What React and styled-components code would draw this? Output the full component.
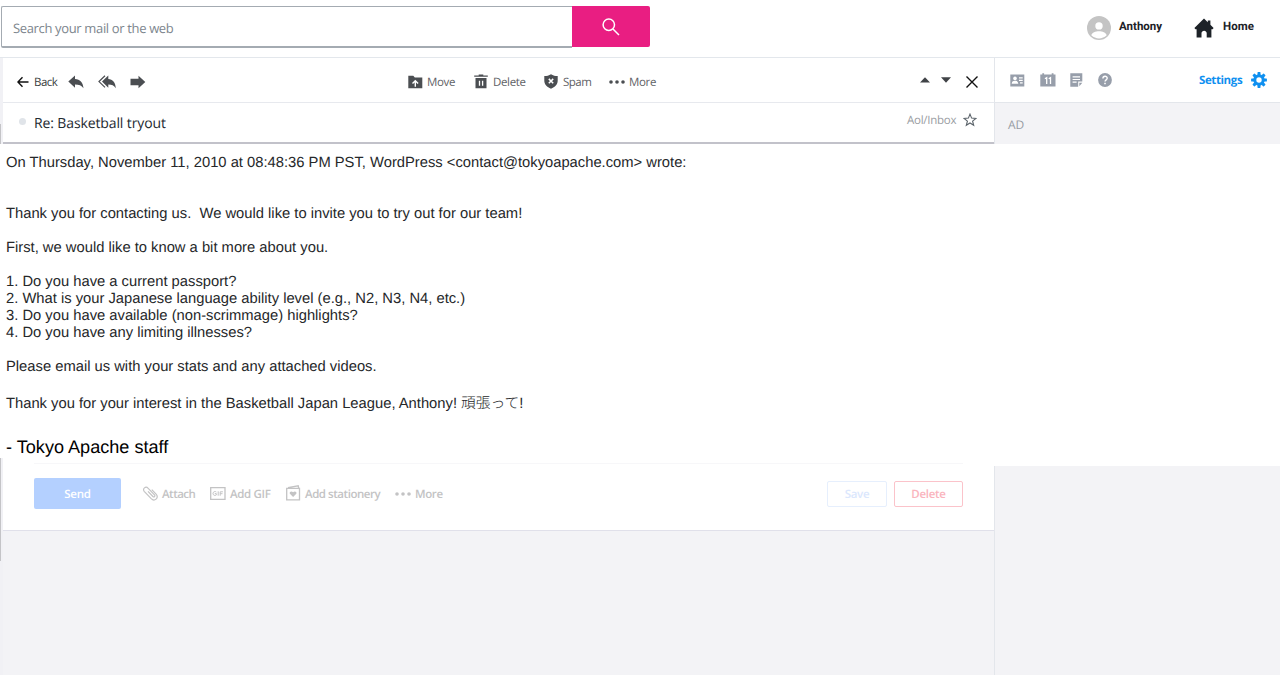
import React from "react";
import styled, { createGlobalStyle } from "styled-components";

const messageLines = [
  { text: "On Thursday, November 11, 2010 at 08:48:36 PM PST, WordPress <contact@tokyoapache.com> wrote:", gap: 34 },
  { text: "Thank you for contacting us.  We would like to invite you to try out for our team!", gap: 17 },
  { text: "First, we would like to know a bit more about you.", gap: 17 },
  { text: "1. Do you have a current passport?" },
  { text: "2. What is your Japanese language ability level (e.g., N2, N3, N4, etc.)" },
  { text: "3. Do you have available (non-scrimmage) highlights?" },
  { text: "4. Do you have any limiting illnesses?", gap: 17 },
  { text: "Please email us with your stats and any attached videos.", gap: 20 },
];

const Dots = () => (
  <svg width="16" height="14" viewBox="0 0 16 14" fill="currentColor">
    <circle cx="2" cy="7" r="1.8" />
    <circle cx="8" cy="7" r="1.8" />
    <circle cx="14" cy="7" r="1.8" />
  </svg>
);

const BackIcon = () => (
  <svg width="12" height="12" viewBox="0 0 12 12" fill="none" stroke="#111" strokeWidth="1.4">
    <path d="M11.5 6H1M5.5 1.3L.9 6l4.6 4.7" />
  </svg>
);

const ReplyIcon = () => (
  <svg width="16" height="14" viewBox="0 0 16 14" fill="currentColor">
    <path d="M7 .5v3.4c5 .3 8 3.300 8.500 9.300C13.500 10.300 11 9.400 7 9.400v3.300L.3 6.600z" />
  </svg>
);

const ReplyAllIcon = () => (
  <svg width="18" height="14" viewBox="0 0 18 14" fill="currentColor">
    <path d="M10.300 .5v3.400c4.300.3 7.200 3.300 7.500 9.300-1.700-2.900-3.900-3.800-7.500-3.800v3.300L4 6.600z" />
    <path d="M7 .8L1 6.600l6 5.800" fill="none" stroke="currentColor" strokeWidth="1.200" />
  </svg>
);

const ForwardIcon = () => (
  <svg width="16" height="14" viewBox="0 0 16 14" fill="currentColor">
    <path d="M.5 3.800h8V.8L15.300 7l-6.800 6.200v-3h-8z" />
  </svg>
);

const MoveIcon = () => (
  <svg width="15" height="14" viewBox="0 0 15 14">
    <path d="M.3.800h5l1.500 1.700h7.500v10.800H.3z" fill="currentColor" />
    <path d="M7.300 11.800V6M4.500 8.600l2.800-2.800 2.800 2.800" fill="none" stroke="#fff" strokeWidth="1.400" />
  </svg>
);

const TrashIcon = () => (
  <svg width="14" height="15" viewBox="0 0 14 15">
    <path d="M.2 1.500h4.500V.5h4.600v1h4.500v1.300H.2zM1.500 4h11v10.200h-11z" fill="currentColor" />
    <path d="M5.500 6.800v5M8.600 6.800v5" stroke="#fff" strokeWidth="1.300" />
  </svg>
);

const ShieldIcon = () => (
  <svg width="14" height="15" viewBox="0 0 14 15">
    <path d="M7 .3c2 1.400 4.200 1.700 6.700 1.700v4.500c0 4-2.700 6.500-6.700 8.200C3 13 .3 10.500.3 6.500V2C2.800 2 5 1.700 7 .3z" fill="currentColor" />
    <path d="M4.800 4.900l4.400 4.400M9.200 4.900L4.800 9.300" stroke="#fff" strokeWidth="1.500" />
  </svg>
);

const CloseIcon = () => (
  <svg width="12" height="12" viewBox="0 0 12 12" stroke="#111" strokeWidth="1.400">
    <path d="M.5.5l11 11M11.500.5l-11 11" />
  </svg>
);

const StarIcon = () => (
  <svg width="14" height="14" viewBox="0 0 14 14" fill="none" stroke="#5b636a" strokeWidth="1.100">
    <path d="M7 1.100l1.600 4 4.300.3-3.300 2.700 1.100 4.200L7 10l-3.700 2.300 1.100-4.200L1.100 5.400l4.300-.3z" />
  </svg>
);

const ContactsIcon = () => (
  <svg width="15" height="13" viewBox="0 0 15 13">
    <path d="M.3.500h14v12H.3z" fill="currentColor" />
    <circle cx="5" cy="4.400" r="1.800" fill="#fff" />
    <path d="M1.700 9.700c.2-2.300 1.500-2.900 3.300-2.900s3.100.6 3.300 2.900zM9 3.200h3.700v1.200H9zM9 5.700h3.700v1.200H9zM10 8.200h2.700v1.200H10z" fill="#fff" />
  </svg>
);

const CalendarIcon = () => (
  <svg width="16" height="14" viewBox="0 0 16 14">
    <path d="M.3 1.500h2V.3h1.800v1.200h7.600V.3h1.800v1.200h2v12H.3z" fill="currentColor" />
    <path d="M4.900 5.700l1.800-1v6.200M8.700 5.700l1.800-1v6.200" fill="none" stroke="#fff" strokeWidth="1.300" />
  </svg>
);

const NoteIcon = () => (
  <svg width="13" height="14" viewBox="0 0 13 14">
    <path d="M.3.300h12v8.200H8.200v5.200H.3z" fill="currentColor" />
    <path d="M9.300 9.700h3l-3 3.600z" fill="currentColor" />
    <path d="M2.600 3.900h7.400M2.600 6.500h7.400M2.600 9.100h4" stroke="#fff" strokeWidth="1.100" />
  </svg>
);

const HelpIcon = () => (
  <svg width="14" height="14" viewBox="0 0 14 14">
    <circle cx="7" cy="7" r="6.900" fill="currentColor" />
    <path d="M4.900 5.500c0-3 4.300-2.800 4.300-.3C9.200 6.800 7 6.900 7 8.600" fill="none" stroke="#fff" strokeWidth="1.400" />
    <path d="M6.200 9.700h1.600v1.500H6.200z" fill="#fff" />
  </svg>
);

const GearIcon = () => (
  <svg width="16" height="16" viewBox="0 0 16 16">
    <g fill="currentColor">
      {[0, 45, 90, 135].map((angle) => (
        <rect key={angle} x="6.500" y="0.100" width="3" height="15.800" rx=".6" transform={`rotate(${angle} 8 8)`} />
      ))}
      <circle cx="8" cy="8" r="5.700" />
    </g>
    <circle cx="8" cy="8" r="2.700" fill="#fff" />
  </svg>
);

const ClipIcon = () => (
  <svg width="15" height="15" viewBox="0 0 15 15" fill="none" stroke="currentColor" strokeWidth="1.200">
    <path d="M5 5.300l4.900 5.200c1.200 1.100 2.700-.4 1.600-1.600L5.200 2.300C2.700-.3-.9 2.700 1.200 5.300l7 7.400c3.300 3.300 8-.8 4.900-4.500L8.800 3.700" />
  </svg>
);

const GifIcon = () => (
  <svg width="16" height="13" viewBox="0 0 16 13" fill="none" stroke="currentColor">
    <path d="M.7.700h14.300v11.600H.7z" strokeWidth="1.300" />
    <path d="M6.300 5C5.200 4 3 4.600 3 6.500s2.200 2.500 3.300 1.500V6.600H4.800M8.200 4.300v4.400M10.200 8.700V4.800h2.700M10.200 6.700h2.300" strokeWidth="1" />
  </svg>
);

const StationeryIcon = () => (
  <svg width="15" height="17" viewBox="0 0 15 17">
    <path d="M.7 3.300h12.800v11.600H.7zM2 2.600L12.200.8l.5 2.200" fill="none" stroke="currentColor" strokeWidth="1.300" />
    <path d="M7.100 12L3.900 8.700C2.900 7.200 5.300 5.200 7.100 7.300c1.800-2.100 4.200-.1 3.200 1.400z" fill="currentColor" />
  </svg>
);

export default function App() {
  return (
    <>
      <GlobalStyle />
      <Page>
        <Header>
          <SearchInput>
            <Label $size={13} $w={165} $track={-0.35}>Search your mail or the web</Label>
          </SearchInput>
          <SearchButton>
            <svg width="18" height="18" viewBox="0 0 18 18" fill="none" stroke="#fff" strokeWidth="1.500">
              <circle cx="6.800" cy="6.800" r="5.700" />
              <path d="M11 11l6 6" />
            </svg>
          </SearchButton>
          <Account>
            <svg width="24" height="24" viewBox="0 0 24 24">
              <circle cx="12" cy="12" r="12" fill="#c4c4c4" />
              <circle cx="12" cy="9.900" r="3.700" fill="#fff" />
              <path d="M4.300 19.300c1.500-5.300 13.900-5.300 15.400 0-4.500 4.200-10.900 4.200-15.400 0z" fill="#fff" />
            </svg>
            <AccountName>Anthony</AccountName>
          </Account>
          <HomeLink>
            <svg width="20" height="20" viewBox="0 0 20 20" fill="#1d2228">
              <path d="M10 .5l3.800 3.700V2.500h2.600v4.300l3.200 3.300-1 1.100h-1.200v8.300h-4.700v-4.200c0-3.400-5.200-3.400-5.200 0v4.200H2.600v-8.300H1.400L.4 10z" />
            </svg>
            <AccountName>Home</AccountName>
          </HomeLink>
        </Header>

        <MailTop>
          <Gutter><Scrollbar $top={66} $height={20} /></Gutter>
          <MailColumn>
            <Toolbar>
              <Tool $gap={5}><BackIcon /><Label $w={23} $color="#3a3d40" $track={-0.5}>Back</Label></Tool>
              <Tool $left={11}><ReplyIcon /></Tool>
              <Tool $left={14}><ReplyAllIcon /></Tool>
              <Tool $left={14}><ForwardIcon /></Tool>
              <Tool $left={262} $gap={4}><MoveIcon /><Label $w={28} $color="#5f6266">Move</Label></Tool>
              <Tool $left={19}><TrashIcon /><Label $w={32} $color="#5f6266">Delete</Label></Tool>
              <Tool $left={19}><ShieldIcon /><Label $w={28} $color="#5f6266" $track={-0.5}>Spam</Label></Tool>
              <Tool $left={18} $gap={4}><Dots /><Label $w={27} $color="#5f6266">More</Label></Tool>
              <Pager>
                <svg width="10" height="6" viewBox="0 0 10 6"><path d="M0 5.500h10L5 .3z" fill="#404347" /></svg>
                <svg width="10" height="6" viewBox="0 0 10 6"><path d="M0 .3h10L5 5.700z" fill="#404347" /></svg>
              </Pager>
              <CloseIcon />
            </Toolbar>
            <SubjectBar>
              <UnreadDot />
              <Subject>Re: Basketball tryout</Subject>
              <Folder><Label $w={49} $color="#9a9da2" $track={-0.25}>Aol/Inbox</Label><StarIcon /></Folder>
            </SubjectBar>
          </MailColumn>
          <SideColumn>
            <SideToolbar>
              <ContactsIcon />
              <CalendarIcon />
              <NoteIcon />
              <HelpIcon />
              <Settings>
                <Label $weight={700} $color="#0f90f0" $w={43} $track={-0.4}>Settings</Label>
                <GearIcon />
              </Settings>
            </SideToolbar>
            <AdLabel>AD</AdLabel>
          </SideColumn>
        </MailTop>

        <Message>
          {messageLines.map((line) => (
            <Line key={line.text} $gap={line.gap}>{line.text}</Line>
          ))}
          <Line>
            Thank you for your interest in the Basketball Japan League, Anthony! <Cheer>頑張って</Cheer>!
          </Line>
          <SignOff>- Tokyo Apache staff</SignOff>
        </Message>

        <MailBottom>
          <Gutter><Scrollbar $top={0} $height={103} /></Gutter>
          <MailColumn>
            <Composer>
              <Divider />
              <ComposerRow>
                <SendButton>Send</SendButton>
                <Tool $left={22} $gap={4}><ClipIcon /><Label $weight={600} $w={33} $track={-0.5}>Attach</Label></Tool>
                <Tool $left={15} $gap={4}><GifIcon /><Label $weight={600} $w={41} $track={-0.35}>Add GIF</Label></Tool>
                <Tool $left={15} $gap={4}><StationeryIcon /><Label $weight={600} $w={76} $track={-0.45}>Add stationery</Label></Tool>
                <Tool $left={14} $gap={4}><Dots /><Label $weight={600} $w={27} $track={-0.4}>More</Label></Tool>
                <DraftActions>
                  <OutlineButton $w={60} $border="#e6effd" $color="#dbe7fd">Save</OutlineButton>
                  <OutlineButton $w={69} $border="#fbc3ca" $color="#fab4bd">Delete</OutlineButton>
                </DraftActions>
              </ComposerRow>
            </Composer>
          </MailColumn>
          <EmptySide />
        </MailBottom>
      </Page>
    </>
  );
}

const GlobalStyle = createGlobalStyle`
  * {
    box-sizing: border-box;
  }

  body {
    margin: 0;
    background: #fff;
    font-family: "Open Sans", "Noto Sans", sans-serif;
    text-rendering: geometricPrecision;
  }

  svg {
    display: block;
    flex: none;
  }
`;

const Page = styled.div`
  width: 1280px;
  height: 675px;
  display: flex;
  flex-direction: column;
  overflow: hidden;
`;

const Header = styled.header`
  height: 58px;
  flex: none;
  display: flex;
  padding: 6px 0 0 1px;
  border-bottom: 1px solid #e3e7ec;
`;

const SearchInput = styled.div`
  width: 571px;
  height: 42px;
  display: flex;
  align-items: center;
  padding-left: 11px;
  border: 1px solid #a4abb2;
  border-bottom-width: 2px;
  border-right: 0;
  border-radius: 2px 0 0 2px;
  color: #7d868e;
`;

const SearchButton = styled.div`
  width: 78px;
  height: 41px;
  display: flex;
  align-items: center;
  justify-content: center;
  background: #e91e82;
  border-radius: 0 2px 2px 0;
`;

const Account = styled.div`
  height: 41px;
  display: flex;
  align-items: center;
  gap: 8px;
  margin-left: 437px;

  svg {
    margin-top: 3px;
  }
`;

const HomeLink = styled(Account)`
  gap: 9px;
  margin-left: 32px;
`;

const AccountName = styled.span`
  padding-bottom: 1px;
  font: 700 11.5px/19px Roboto, sans-serif;
  color: #1d2228;
`;

const MailTop = styled.div`
  height: 86px;
  flex: none;
  display: flex;
`;

const Gutter = styled.div`
  width: 3px;
  flex: none;
  background: #f1f1f5;
`;

const Scrollbar = styled.div`
  width: 1px;
  height: ${(p) => p.$height}px;
  margin-top: ${(p) => p.$top}px;
  background: #c4c4c7;
`;

const MailColumn = styled.div`
  width: 991px;
  flex: none;
`;

const Toolbar = styled.div`
  height: 45px;
  display: flex;
  align-items: center;
  padding: 3px 16px 0 14px;
  border-bottom: 1px solid #e7e9ee;
  color: #4b4e52;
`;

const Tool = styled.div`
  display: flex;
  align-items: center;
  gap: ${(p) => p.$gap ?? 5}px;
  margin-left: ${(p) => p.$left ?? 0}px;
`;

const Label = styled.span`
  width: ${(p) => p.$w}px;
  flex: none;
  font-size: ${(p) => p.$size ?? 11.5}px;
  font-weight: ${(p) => p.$weight ?? 400};
  letter-spacing: ${(p) => p.$track ?? -0.35}px;
  line-height: 16px;
  padding-top: 2px;
  white-space: nowrap;
  color: ${(p) => p.$color ?? "inherit"};
`;

const Pager = styled.div`
  display: flex;
  gap: 11px;
  margin: 0 15px 4px auto;
`;

const SubjectBar = styled.div`
  height: 41px;
  display: flex;
  align-items: center;
  padding: 0 17px 0 16px;
  border-bottom: 2px solid #c2c2ca;
`;

const UnreadDot = styled.div`
  width: 7px;
  height: 7px;
  margin-bottom: 2px;
  border-radius: 50%;
  background: #e0e4e9;
`;

const Subject = styled.div`
  margin-left: 8px;
  padding-top: 2px;
  font-size: 14px;
  letter-spacing: -0.12px;
  color: #232a31;
`;

const Folder = styled.div`
  display: flex;
  align-items: center;
  gap: 7px;
  margin: 0 0 6px auto;
`;

const SideColumn = styled.div`
  flex: 1;
  border-left: 1px solid #e3e6eb;
  background: #f3f3f6;
`;

const SideToolbar = styled.div`
  height: 45px;
  display: flex;
  align-items: center;
  gap: 14.5px;
  padding: 0 13px 0 15px;
  background: #fff;
  border-bottom: 1px solid #e3e6eb;
  color: #979eaa;
`;

const Settings = styled.div`
  display: flex;
  align-items: center;
  gap: 9px;
  margin-left: auto;
  color: #0f90f0;
`;

const AdLabel = styled.div`
  padding: 14px 0 0 13px;
  font-size: 12px;
  line-height: 16px;
  color: #979ba3;
`;

const Message = styled.article`
  height: 314px;
  flex: none;
  padding: 11px 0 0 6px;
  font-family: "Liberation Sans", "Noto Sans CJK JP", sans-serif;
  color: #26282a;
`;

const Line = styled.div`
  height: 17px;
  margin-bottom: ${(p) => p.$gap ?? 0}px;
  font-size: 14.75px;
  line-height: 17px;
  white-space: pre;
`;

const Cheer = styled.span`
  font-family: "Noto Sans CJK JP", sans-serif;
  font-weight: 300;
  line-height: 1;
`;

const SignOff = styled.div`
  margin-top: 24px;
  font-size: 18.1px;
  line-height: 20px;
  color: #000;
`;

const MailBottom = styled.div`
  flex: 1;
  display: flex;
  background: linear-gradient(#fff 8px, #f3f3f6 8px);
`;

const Composer = styled.div`
  height: 73px;
  padding: 5px 31px 0;
  background: #fff;
  border-bottom: 1px solid #e0e0ea;
`;

const Divider = styled.div`
  height: 1px;
  background: #f7f7f9;
`;

const ComposerRow = styled.div`
  height: 31px;
  display: flex;
  align-items: center;
  margin-top: 14px;
  color: #c3c3c4;
`;

const SendButton = styled.div`
  width: 87px;
  height: 31px;
  border-radius: 2px;
  background: #b4d0ff;
  color: #fff;
  font-size: 11.5px;
  font-weight: 600;
  letter-spacing: -0.2px;
  line-height: 33px;
  text-align: center;
`;

const DraftActions = styled.div`
  display: flex;
  gap: 7px;
  margin-left: auto;
`;

const OutlineButton = styled.div`
  width: ${(p) => p.$w}px;
  height: 26px;
  border: 1px solid ${(p) => p.$border};
  border-radius: 2px;
  color: ${(p) => p.$color};
  font-size: 11.5px;
  font-weight: 600;
  letter-spacing: -0.3px;
  line-height: 26px;
  text-align: center;
`;

const EmptySide = styled.aside`
  flex: 1;
  margin-top: 8px;
  border-left: 1px solid #e3e6eb;
`;
